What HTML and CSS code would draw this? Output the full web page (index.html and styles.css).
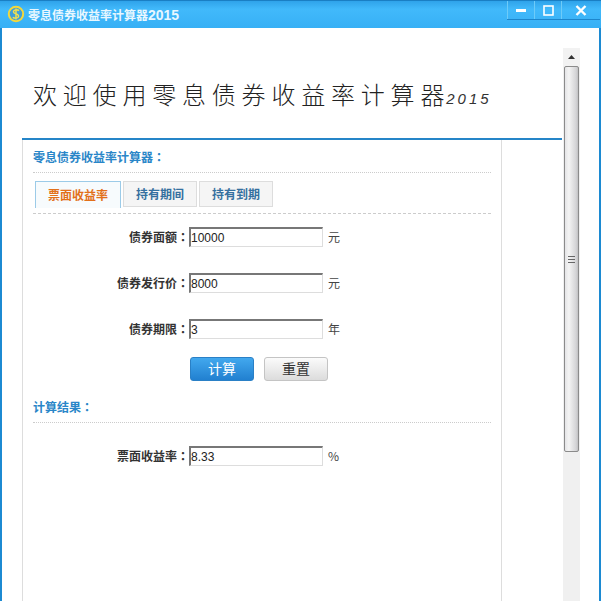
FILE: index.html
```html
<!DOCTYPE html>
<html lang="zh-CN">
<head>
<meta charset="utf-8">
<title>零息债券收益率计算器2015</title>
<link rel="stylesheet" href="styles.css">
</head>
<body>
<div class="window">
  <header class="titlebar">
    <svg class="app-icon" width="18" height="18" viewBox="0 0 18 18"><circle cx="9" cy="9" r="7.2" fill="#3f9fd8" stroke="#f3d83c" stroke-width="2"/><path d="M12 5.6C10.6 4.4 6.6 4.4 6.4 6.8 6.2 9.2 11.8 8.6 11.6 11.2 11.4 13.6 7.2 13.6 5.8 12.2M9 3.4V14.6" fill="none" stroke="#f6e14a" stroke-width="1.4"/></svg>
    <span class="app-title">零息债券收益率计算器<span class="app-year">2015</span></span>
    <div class="win-controls">
      <div class="win-btn win-min"><svg width="10" height="10" viewBox="0 0 10 10"><rect x="0" y="4" width="10" height="3" fill="#fff"/></svg></div>
      <div class="win-btn win-max"><svg width="11" height="11" viewBox="0 0 11 11"><rect x="1" y="1" width="9" height="9" fill="none" stroke="#fff" stroke-width="1.6"/></svg></div>
      <div class="win-btn win-close"><svg width="12" height="11" viewBox="0 0 12 11"><path d="M1.5 1 10.5 10M10.5 1 1.5 10" stroke="#fff" stroke-width="2.4" fill="none"/></svg></div>
    </div>
  </header>
  <div class="client">
    <main class="page">
      <div class="banner"><span class="banner-text">欢迎使用零息债券收益率计算器</span><span class="banner-year">2015</span></div>
      <section class="panel">
        <h2 class="section-title">零息债券收益率计算器<span class="colon" lang="zh-TW">：</span></h2>
        <nav class="tabs">
          <div class="tab tab-active">票面收益率</div>
          <div class="tab tab-mid">持有期间</div>
          <div class="tab tab-last">持有到期</div>
        </nav>
        <div class="rows">
          <div class="row"><label class="row-label">债券面额<span class="colon" lang="zh-TW">：</span></label><input class="field" value="10000"><span class="unit">元</span></div>
          <div class="row"><label class="row-label">债券发行价<span class="colon" lang="zh-TW">：</span></label><input class="field" value="8000"><span class="unit">元</span></div>
          <div class="row"><label class="row-label">债券期限<span class="colon" lang="zh-TW">：</span></label><input class="field" value="3"><span class="unit">年</span></div>
        </div>
        <div class="actions">
          <button class="btn btn-primary">计算</button>
          <button class="btn btn-plain">重置</button>
        </div>
        <h2 class="section-title result-title">计算结果<span class="colon" lang="zh-TW">：</span></h2>
        <div class="row result-row"><label class="row-label">票面收益率<span class="colon" lang="zh-TW">：</span></label><input class="field" value="8.33"><span class="unit">%</span></div>
      </section>
    </main>
    <aside class="scrollbar">
      <div class="scroll-up"><svg width="7" height="4" viewBox="0 0 7 4"><path d="M3.5 0 7 4H0Z" fill="#333"/></svg></div>
      <div class="scroll-thumb"><svg width="7" height="7" viewBox="0 0 7 7"><path d="M0 .5H7M0 3.5H7M0 6.5H7" stroke="#666"/></svg></div>
    </aside>
  </div>
</div>
</body>
</html>
```
FILE: styles.css
```css
* { box-sizing: border-box; }
html, body { margin: 0; padding: 0; }
body { width: 601px; height: 601px; overflow: hidden; background: #fff; font-family: "Liberation Sans", "Noto Sans CJK SC", sans-serif; font-size: 12px; color: #333; }
.window { width: 601px; height: 601px; display: flex; flex-direction: column; overflow: hidden; }
.titlebar { height: 28px; flex: none; display: flex; align-items: center; padding-left: 7px; background: linear-gradient(#2fa3ea, #41b9fb 30%, #37b0f5); border-top: 1px solid #1a7fc4; position: relative; }
.app-icon { flex: none; margin-top: -1px; }
.app-title { margin-left: 3px; margin-top: -1px; font-size: 12px; font-weight: bold; color: #e8f7ff; font-family: "Noto Sans CJK SC", sans-serif; }
.app-year { font: bold 14px "Liberation Sans", sans-serif; }
.colon { font-family: "Noto Sans CJK TC", sans-serif; }
.win-controls { position: absolute; top: 0; right: 1px; display: flex; height: 19px; width: 93px; border-bottom: 1px solid #1d86cc; }
.win-btn { display: flex; align-items: center; justify-content: center; height: 18px; border-left: 1px solid #6ecbf8; }
.win-min { width: 27px; }
.win-max { width: 27px; }
.win-close { width: 39px; }
.client { flex: 1; min-height: 0; display: flex; border-left: 2px solid #1c8ad2; border-right: 2px solid #1c8ad2; }
.page { width: 540px; margin-left: 20px; flex: none; }
.banner { height: 112px; padding: 46px 0 0 11px; border-bottom: 2px solid #2585c8; display: flex; align-items: baseline; }
.banner-text { font-family: "Noto Sans CJK JP", sans-serif; font-weight: 300; font-size: 24px; letter-spacing: 5.8px; line-height: 40px; color: #222; white-space: nowrap; }
.banner-year { margin-left: -4px; font-family: "Liberation Sans", sans-serif; font-size: 15px; font-style: italic; letter-spacing: 3px; color: #333; }
.panel { width: 480px; height: 461px; border-left: 1px solid #ddd; border-right: 1px solid #ddd; padding: 0 10px; }
.section-title { margin: 0; height: 33px; padding-top: 8px; font-size: 12px; line-height: 17px; font-weight: bold; color: #2a86c8; font-family: "Noto Sans CJK SC", sans-serif; border-bottom: 1px dotted #ccc; }
.tabs { display: flex; gap: 2px; height: 41px; padding: 8px 0 0 2px; border-bottom: 1px dashed #ccc; align-items: flex-start; }
.tab { height: 26px; padding-bottom: 1px; display: flex; align-items: center; justify-content: center; font-size: 12px; font-weight: bold; color: #35709f; background: #f5f5f5; border: 1px solid #ddd; border-bottom-color: #ddd; font-family: "Noto Sans CJK SC", sans-serif; }
.tab-active { width: 86px; height: 27px; color: #e2701a; background: #f7fbfd; border-color: #9ccbe8; border-bottom: 0; }
.tab-mid { width: 74px; }
.tab-last { width: 74px; }
.rows { padding-top: 13px; display: flex; flex-direction: column; gap: 26px; }
.row { display: flex; align-items: center; height: 20px; }
.row-label { width: 156px; margin-bottom: 2px; text-align: right; font-weight: bold; color: #333; white-space: nowrap; font-family: "Noto Sans CJK SC", sans-serif; }
.field { width: 134px; height: 20px; margin: 0; padding: 0; font: 12px "Liberation Sans", sans-serif; color: #222; background: #fff; border-style: solid; border-width: 2px 1px 1px 2px; border-color: #777 #ddd #ddd #777; outline: 0; }
.unit { margin-left: 5px; margin-bottom: 2px; font-family: "Noto Sans CJK SC", sans-serif; color: #444; }
.actions { display: flex; gap: 10px; padding: 18px 0 0 157px; }
.btn { width: 64px; height: 24px; padding: 0 0 2px; border-radius: 3px; font-size: 14px; font-family: "Noto Sans CJK SC", sans-serif; }
.btn-primary { color: #fff; border: 1px solid #2a80c6; background: linear-gradient(#42a8ee, #2180d0); }
.btn-plain { color: #333; border: 1px solid #c4c4c4; background: linear-gradient(#fbfbfb, #dcdcdc); }
.result-title { margin-top: 17px; height: 25px; padding-top: 0; }
.result-row { margin-top: 23px; }
.scrollbar { width: 17px; margin: 20px 0 0 1px; flex: none; background: #f0f0f0; display: flex; flex-direction: column; }
.scroll-up { height: 18px; display: flex; align-items: center; justify-content: center; background: #f2f2f2; }
.scroll-thumb { width: 15px; height: 386px; margin-left: 1px; border: 1px solid #8b8b8b; border-radius: 2px; background: linear-gradient(90deg, #e4e4e6, #f4f4f4 30%, #d4d4d6 85%, #c0c0c2); display: flex; align-items: center; justify-content: center; }
```
